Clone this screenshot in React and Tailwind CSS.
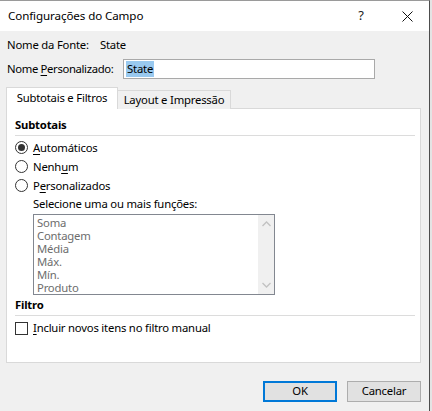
import React from "react";

const font = { fontFamily: '"Noto Sans", "Open Sans", sans-serif' };

function Radio({ checked, children }) {
  return (
    <div className="flex items-center h-[19px]">
      <div className="w-[13px] h-[13px] rounded-full border border-[#333] bg-white flex items-center justify-center">
        {checked && <div className="w-[7px] h-[7px] rounded-full bg-[#333]" />}
      </div>
      <div className="ml-[5px] text-black leading-[16px] whitespace-nowrap">{children}</div>
    </div>
  );
}

export default function App() {
  const items = ["Soma", "Contagem", "Média", "Máx.", "Mín.", "Produto"];
  return (
    <div className="w-[432px] h-[411px] flex bg-[#e4e4e4] overflow-hidden text-[11.3px] tracking-[-0.2px]" style={font}>
      <div className="w-[430px] h-full flex flex-col border-t border-t-[#9a9a9a] border-r border-r-[#4d4d4d]">
        {/* title bar */}
        <div className="h-[30px] bg-white flex items-center shrink-0">
          <div className="pl-[8px] text-[11.6px] tracking-[-0.1px] text-black flex-1 whitespace-nowrap">Configurações do Campo</div>
          <div className="w-[30px] text-center text-[13px] text-[#222] mr-[16px]">?</div>
          <div className="w-[30px] flex items-center justify-center mr-[7px]">
            <svg width="11" height="11" viewBox="0 0 11 11">
              <path d="M0.5 0.5 L10.5 10.5 M10.5 0.5 L0.5 10.5" stroke="#111" strokeWidth="1" />
            </svg>
          </div>
        </div>
        {/* body */}
        <div className="flex-1 bg-[#f0f0f0] flex flex-col pl-[6px] pr-[8px]">
          <div className="mt-[6px] h-[16px] flex items-center pl-[1px] text-black whitespace-nowrap">
            <span>Nome da Fonte:</span>
            <span className="ml-[11px]">State</span>
          </div>
          <div className="mt-[6px] h-[20px] flex items-center pl-[1px] text-black">
            <span className="w-[116px] whitespace-nowrap tracking-[-0.35px]">
              Nome <u className="underline-offset-2">P</u>ersonalizado:
            </span>
            <div className="w-[252px] h-[20px] bg-white border border-[#a9a9a9] flex items-center pl-[2px]">
              <span className="bg-[#99c9ef] px-[1px] leading-[16px]">State</span>
            </div>
          </div>
          {/* tabs */}
          <div className="mt-[8px] flex items-end h-[22px] relative z-10">
            <div className="w-[112px] h-[22px] bg-white border border-b-0 border-[#d9d9d9] flex items-center justify-center text-black whitespace-nowrap">
              Subtotais e Filtros
            </div>
            <div className="w-[113px] h-[19px] border border-l-0 border-b-0 border-[#d9d9d9] flex items-center justify-center text-black bg-[#f0f0f0] whitespace-nowrap">
              Layout e Impressão
            </div>
          </div>
          {/* panel */}
          <div className="-mt-px w-[415px] h-[255px] bg-white border border-[#d9d9d9] pl-[8px] pr-[5px] pt-[8px] flex flex-col">
            <div className="h-[16px] font-bold text-black leading-[16px]">Subtotais</div>
            <div className="mt-[2px] h-px bg-[#dcdcdc]" />
            <div className="mt-[2px] flex flex-col">
              <Radio checked>
                <u className="underline-offset-2">A</u>utomáticos
              </Radio>
              <Radio>
                Nenh<u className="underline-offset-2">u</u>m
              </Radio>
              <Radio>
                P<u className="underline-offset-2">e</u>rsonalizados
              </Radio>
            </div>
            <div className="ml-[18px] mt-[1px] h-[17px] text-black leading-[16px] whitespace-nowrap">
              Selecione uma ou mais funções:
            </div>
            <div className="ml-[18px] mt-[1px] w-[242px] h-[81px] border border-[#828790] bg-white flex">
              <div className="flex-1 pl-[3px] pt-[1px] flex flex-col">
                {items.map((t) => (
                  <div key={t} className="h-[13px] leading-[13px] text-[#6d6d6d]">
                    {t}
                  </div>
                ))}
              </div>
              <div className="w-[16px] bg-[#f0f0f0] flex flex-col justify-between items-center py-[6px]">
                <svg width="9" height="6" viewBox="0 0 9 6">
                  <path d="M0.5 5 L4.5 1 L8.5 5" stroke="#c2c2c2" strokeWidth="1.3" fill="none" />
                </svg>
                <svg width="9" height="6" viewBox="0 0 9 6">
                  <path d="M0.5 1 L4.5 5 L8.5 1" stroke="#c2c2c2" strokeWidth="1.3" fill="none" />
                </svg>
              </div>
            </div>
            <div className="mt-[2px] h-[16px] font-bold text-black leading-[16px]">Filtro</div>
            <div className="mt-[2px] h-px bg-[#dcdcdc]" />
            <div className="mt-[5px] flex items-center h-[14px]">
              <div className="w-[13px] h-[13px] border border-[#333] bg-white" />
              <div className="ml-[5px] text-black leading-[16px] whitespace-nowrap">
                <u className="underline-offset-2">I</u>ncluir novos itens no filtro manual
              </div>
            </div>
          </div>
          {/* buttons */}
          <div className="mt-[18px] flex justify-end gap-[10px]">
            <div className="w-[74px] h-[21px] bg-[#e1e1e1] border-2 border-[#0078d7] flex items-center justify-center text-black">
              OK
            </div>
            <div className="w-[74px] h-[21px] bg-[#e1e1e1] border border-[#adadad] flex items-center justify-center text-black">
              Cancelar
            </div>
          </div>
        </div>
      </div>
      <div className="w-[2px] h-full bg-[#e4e4e4]" />
    </div>
  );
}
